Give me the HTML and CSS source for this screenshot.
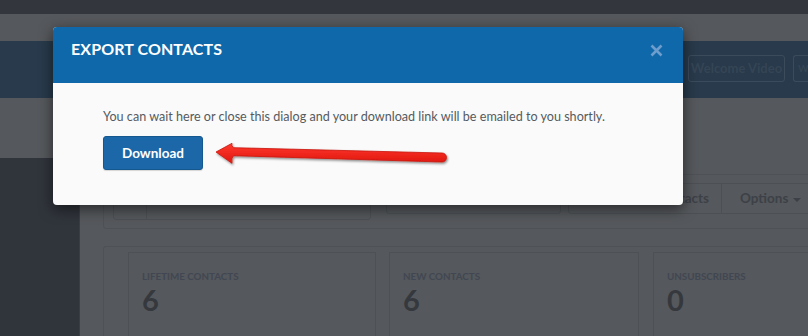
FILE: index.html
```html
<!DOCTYPE html>
<html>
<head>
<meta charset="utf-8">
<link rel="stylesheet" href="styles.css">
</head>
<body>
<div class="app">
  <div class="topbar"></div>
  <div class="subbar"></div>
  <div class="header">
    <span class="hbtn">Welcome Video</span>
    <span class="hbtn hbtn-cut">W</span>
  </div>
  <div class="spacer"></div>
  <div class="main">
    <aside class="sidebar"></aside>
    <section class="content">
      <div class="toolbar">
        <div class="search"><span class="search-icon"></span><span class="search-field"></span></div>
        <div class="filter"></div>
        <div class="btn-group">
          <span class="tbtn tbtn-wide">Import Contacts</span>
          <span class="tbtn tbtn-opt">Options <span class="caret"></span></span>
        </div>
      </div>
      <div class="stats">
        <div class="stat stat-1"><div class="stat-label">LIFETIME CONTACTS</div><div class="stat-num">6</div></div>
        <div class="stat stat-2"><div class="stat-label">NEW CONTACTS</div><div class="stat-num">6</div></div>
        <div class="stat stat-3"><div class="stat-label">UNSUBSCRIBERS</div><div class="stat-num">0</div></div>
      </div>
    </section>
  </div>
</div>

<div class="modal">
  <div class="modal-header">
    <h2 class="modal-title">EXPORT CONTACTS</h2>
    <svg class="modal-close" width="13" height="13" viewBox="0 0 13 13"><path d="M1.5 1.5 L11.5 11.5 M11.5 1.5 L1.5 11.5" stroke="currentColor" stroke-width="2.6" stroke-linecap="butt"/></svg>
  </div>
  <div class="modal-body">
    <p class="modal-text">You can wait here or close this dialog and your download link will be emailed to you shortly.</p>
    <button class="btn-download">Download</button>
    <svg class="arrow" width="236" height="30" viewBox="0 0 236 30">
      <defs>
        <filter id="sh" x="-5%" y="-40%" width="110%" height="190%">
          <feDropShadow dx="1" dy="1.5" stdDeviation="1.3" flood-color="#000" flood-opacity="0.45"/>
        </filter>
        <linearGradient id="rg" x1="0" y1="0" x2="0" y2="1">
          <stop offset="0" stop-color="#ff3a2e"/>
          <stop offset="1" stop-color="#e0160f"/>
        </linearGradient>
      </defs>
      <path filter="url(#sh)" fill="url(#rg)" stroke="#c8170f" stroke-width="0.8" d="M2 12 L18 3.3 Q17 6 19.5 7.7 L228 13 A4.5 4.5 0 0 1 228 22 L19.5 15.7 Q17 18 18 23.3 Z"/>
    </svg>
  </div>
</div>
</body>
</html>
```

FILE: styles.css
```css
* { box-sizing: border-box; }
html, body { margin: 0; padding: 0; }
body {
  width: 808px;
  height: 336px;
  overflow: hidden;
  background: #55585c;
  font-family: "Lato", "Open Sans", sans-serif;
  position: relative;
}
.app { width: 808px; height: 336px; overflow: hidden; }
.topbar { height: 14px; background: #33363d; }
.subbar { height: 27px; background: #55585c; }
.header {
  height: 57px;
  background: #283a4b;
  display: flex;
  align-items: flex-start;
  gap: 8px;
  padding: 14px 0 0 688px;
  overflow: hidden;
  white-space: nowrap;
}
.hbtn {
  flex: none;
  height: 27px;
  width: 97px;
  border: 1px solid #3b4b5c;
  border-radius: 3px;
  color: #354555;
  font-weight: 700;
  font-size: 13px;
  line-height: 25px;
  text-align: center;
}
.hbtn-cut { width: 15px; text-align: left; padding-left: 4px; font-size: 10px; border-right: none; border-radius: 3px 0 0 3px; }
.spacer { height: 60px; }
.main { display: flex; height: 178px; }
.sidebar { width: 80px; flex: none; background: #30343b; border-right: 1px solid #3a3e44; }
.content { flex: 1; padding: 16px 0 0 23px; overflow: hidden; }
.toolbar {
  width: 720px;
  height: 55px;
  border: 1px solid #4e5257;
  border-radius: 3px;
  display: flex;
  align-items: flex-start;
  padding: 8px 0 0 9px;
}
.search {
  width: 261px; height: 37px;
  border: 1px solid #4c5055;
  border-radius: 3px;
  display: flex;
}
.search-icon { width: 33px; border-right: 1px solid #4c5055; }
.filter {
  margin-left: 15px;
  width: 177px; height: 31px;
  border: 1px solid #4c5055;
  border-radius: 3px;
}
.btn-group { margin-left: 7px; display: flex; }
.tbtn {
  flex: none;
  height: 31px;
  border: 1px solid #4c5055;
  color: #3d4147;
  font-weight: 700;
  font-size: 13.5px;
  line-height: 29px;
  white-space: nowrap;
}
.tbtn-wide { width: 154px; text-align: right; padding-right: 12px; border-radius: 3px 0 0 3px; }
.tbtn-opt { border-left: none; width: 100px; padding-left: 18px; }
.caret {
  display: inline-block;
  width: 0; height: 0;
  border-left: 4px solid transparent;
  border-right: 4px solid transparent;
  border-top: 4px solid #3d4147;
  vertical-align: middle;
  margin-left: 1px;
}
.stats {
  margin-top: 17px;
  width: 720px;
  height: 100px;
  border: 1px solid #4e5257;
  border-bottom: none;
  border-radius: 3px 3px 0 0;
  display: flex;
  gap: 13px;
  padding: 5px 0 0 24px;
}
.stat {
  flex: none;
  height: 95px;
  border: 1px solid #4d5156;
  border-bottom: none;
  padding: 17px 0 0 13px;
}
.stat-1 { width: 248px; }
.stat-2 { width: 250px; }
.stat-3 { width: 200px; margin-left: 1px; }
.stat-label {
  font-size: 9.8px;
  font-weight: 700;
  color: #414752;
  line-height: 13px;
}
.stat-num {
  font-size: 29px;
  font-weight: 700;
  color: #35383d;
  line-height: 32px;
  margin-top: 1px;
}

.modal {
  position: absolute;
  left: 53px;
  top: 27px;
  width: 630px;
  height: 178px;
  border-radius: 4px;
  overflow: hidden;
  background: #fafafa;
  box-shadow: 0 4px 14px rgba(0, 0, 0, 0.55);
}
.modal-header {
  height: 56px;
  background: #0e68a9;
  display: flex;
  align-items: flex-start;
  justify-content: space-between;
  padding: 12px 20px 0 18px;
}
.modal-title {
  margin: 0;
  color: #ffffff;
  font-size: 16px;
  line-height: 20px;
  font-weight: 700;
  letter-spacing: 0.1px;
}
.modal-close { color: #6d9dcc; margin-top: 5px; }
.modal-body {
  position: relative;
  padding: 25px 50px 0 50px;
}
.modal-text {
  margin: 0 0 10px 0;
  font-size: 12.6px;
  line-height: 18px;
  color: #555a60;
}
.btn-download {
  display: block;
  width: 100px;
  height: 34px;
  border: 1px solid #15588f;
  border-radius: 3px;
  background: #1b67a8;
  color: #ffffff;
  font-family: inherit;
  font-weight: 700;
  font-size: 13.5px;
  line-height: 30px;
  padding: 0;
  box-shadow: 0 1px 1px rgba(0,0,0,0.15);
}
.arrow {
  position: absolute;
  left: 161px;
  top: 57px;
}
```
